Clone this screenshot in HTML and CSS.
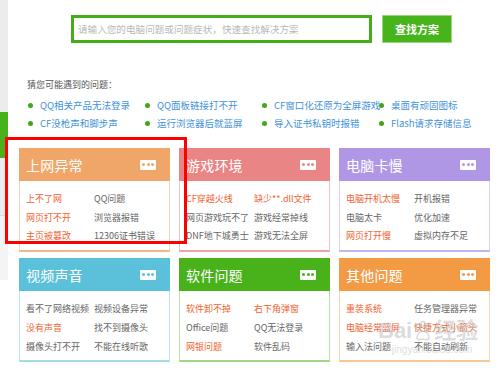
FILE: index.html
```html
<!DOCTYPE html>
<html lang="zh-CN">
<head>
    <meta charset="UTF-8">
    <meta name="viewport" content="width=device-width, initial-scale=1.0">
    <title>电脑问题诊断</title>
    <link rel="stylesheet" href="styles.css">
</head>
<body>
    <div class="page">
        <div class="side">
            <div class="side-top"></div>
            <div class="side-active"></div>
            <div class="side-mid"></div>
            <div class="side-low"></div>
        </div>

        <div class="main">
            <div class="search">
                <div class="search-box">请输入您的电脑问题或问题症状，快速查找解决方案</div>
                <div class="search-btn">查找方案</div>
            </div>

            <div class="guess-title">猜您可能遇到的问题：</div>
            <ul class="guess-list">
                <li>QQ相关产品无法登录</li>
                <li>QQ面板链接打不开</li>
                <li>CF窗口化还原为全屏游戏</li>
                <li>桌面有顽固图标</li>
                <li>CF没枪声和脚步声</li>
                <li>运行浏览器后就蓝屏</li>
                <li>导入证书私钥时报错</li>
                <li>Flash请求存储信息</li>
            </ul>

            <div class="cards">
                <div class="card orange">
                    <div class="card-head"><span class="card-title">上网异常</span><span class="more"><i></i><i></i><i></i></span></div>
                    <div class="card-body">
                        <a class="hot" href="#">上不了网</a><a href="#">QQ问题</a>
                        <a class="hot" href="#">网页打不开</a><a href="#">浏览器报错</a>
                        <a class="hot" href="#">主页被篡改</a><a href="#">12306证书错误</a>
                    </div>
                </div>
                <div class="card pink">
                    <div class="card-head"><span class="card-title">游戏环境</span><span class="more"><i></i><i></i><i></i></span></div>
                    <div class="card-body">
                        <a class="hot" href="#">CF穿越火线</a><a class="hot" href="#">缺少**.dll文件</a>
                        <a href="#">网页游戏玩不了</a><a href="#">游戏经常掉线</a>
                        <a href="#">DNF地下城勇士</a><a href="#">游戏无法全屏</a>
                    </div>
                </div>
                <div class="card purple">
                    <div class="card-head"><span class="card-title">电脑卡慢</span><span class="more"><i></i><i></i><i></i></span></div>
                    <div class="card-body">
                        <a class="hot" href="#">电脑开机太慢</a><a href="#">开机报错</a>
                        <a href="#">电脑太卡</a><a href="#">优化加速</a>
                        <a class="hot" href="#">网页打开慢</a><a href="#">虚拟内存不足</a>
                    </div>
                </div>
                <div class="card cyan">
                    <div class="card-head"><span class="card-title">视频声音</span><span class="more"><i></i><i></i><i></i></span></div>
                    <div class="card-body">
                        <a href="#">看不了网络视频</a><a href="#">视频设备异常</a>
                        <a class="hot" href="#">没有声音</a><a href="#">找不到摄像头</a>
                        <a href="#">摄像头打不开</a><a href="#">不能在线听歌</a>
                    </div>
                </div>
                <div class="card green">
                    <div class="card-head"><span class="card-title">软件问题</span><span class="more"><i></i><i></i><i></i></span></div>
                    <div class="card-body">
                        <a class="hot" href="#">软件卸不掉</a><a class="hot" href="#">右下角弹窗</a>
                        <a href="#">Office问题</a><a href="#">QQ无法登录</a>
                        <a class="hot" href="#">网银问题</a><a href="#">软件乱码</a>
                    </div>
                </div>
                <div class="card amber">
                    <div class="card-head"><span class="card-title">其他问题</span><span class="more"><i></i><i></i><i></i></span></div>
                    <div class="card-body">
                        <a class="hot" href="#">重装系统</a><a href="#">任务管理器异常</a>
                        <a class="hot" href="#">电脑经常蓝屏</a><a class="hot" href="#">快捷方式小箭头</a>
                        <a href="#">输入法问题</a><a href="#">不能自动刷新</a>
                    </div>
                </div>
            </div>
        </div>

        <div class="mark"></div>

        <div class="watermark">
            <div class="wm-logo">Bai<svg width="22" height="22" viewBox="0 0 22 22"><g fill="none" stroke="currentColor" stroke-width="1.6"><ellipse cx="6" cy="7" rx="2" ry="3"/><ellipse cx="11" cy="4.5" rx="2" ry="3"/><ellipse cx="16" cy="7" rx="2" ry="3"/><path d="M5 18c0-4 3-7 6-7s6 3 6 7c0 2-3 2-6 1-3 1-6 1-6-1z"/></g></svg>经验</div>
            <div class="wm-url">jingyan.baidu.com</div>
        </div>
    </div>
</body>
</html>
```

FILE: styles.css
```css
body {
    margin: 0;
    padding: 0;
    background: #fff;
    font-family: "Microsoft YaHei", "Noto Sans CJK SC", "Noto Sans", sans-serif;
}

.page {
    position: relative;
    width: 500px;
    height: 372px;
    overflow: hidden;
    display: flex;
}

/* left sidebar strip */
.side {
    width: 8px;
    flex-shrink: 0;
    display: flex;
    flex-direction: column;
}

.side-top { height: 112px; background: #ececec; }
.side-active { height: 46px; background: #48b21c; }
.side-mid { height: 57px; background: #ececec; border-bottom: 1px solid #dcdcdc; }
.side-low { height: 64px; background: #f4f4f4; }

.main {
    flex: 1;
}

/* search */
.search {
    display: flex;
    gap: 10px;
    margin: 15px 0 0 63px;
}

.search-box {
    box-sizing: border-box;
    width: 301px;
    height: 28px;
    border: 3px solid #44ae18;
    padding-left: 4px;
    font-size: 9.6px;
    line-height: 22px;
    color: #b8b8b8;
}

.search-btn {
    box-sizing: border-box;
    width: 70px;
    height: 28px;
    background: #47b41b;
    border: 1px solid #9ad77c;
    color: #fff;
    font-size: 11px;
    font-weight: bold;
    line-height: 26px;
    text-align: center;
}

/* guess list */
.guess-title {
    margin: 35px 0 0 19px;
    font-size: 9px;
    line-height: 14px;
    color: #555;
}

.guess-list {
    list-style: none;
    margin: 4px 0 0 19px;
    padding: 0;
    display: grid;
    grid-template-columns: repeat(4, 117px);
}

.guess-list li {
    display: flex;
    align-items: center;
    gap: 7px;
    height: 18px;
    font-size: 9.5px;
    color: #3f92da;
    white-space: nowrap;
}

.guess-list li::before {
    content: "";
    width: 5px;
    height: 5px;
    margin-left: 1px;
    border-radius: 50%;
    background: #3fa817;
    flex-shrink: 0;
}

/* category cards */
.cards {
    margin: 16px 0 0 11px;
    display: grid;
    grid-template-columns: repeat(3, 151px);
    column-gap: 9px;
    row-gap: 6px;
}

.card-head {
    height: 33px;
    display: flex;
    align-items: center;
    justify-content: space-between;
    padding: 0 14px 0 7px;
    color: #fff;
}

.card-title {
    font-size: 14px;
    letter-spacing: 0.2px;
}

.more {
    width: 16px;
    height: 10px;
    background: #fff;
    border-radius: 1px;
    display: flex;
    align-items: center;
    justify-content: center;
    gap: 1.5px;
}

.more i {
    width: 3px;
    height: 3px;
    border-radius: 50%;
    background: currentColor;
}

.card-body {
    display: grid;
    grid-template-columns: 68px 1fr;
    padding: 9px 0 4px 6px;
    border: 1px solid;
    border-top: none;
    border-bottom-width: 2px;
}

.card-body a {
    font-size: 9px;
    line-height: 18.7px;
    color: #666;
    text-decoration: none;
    white-space: nowrap;
}

.card-body a.hot {
    color: #f2622e;
}

.orange .card-head { background: #f1a669; }
.orange .more { color: #f1a669; }
.orange .card-body { border-color: #f8d3b6; border-bottom-color: #f3b888; }

.pink .card-head { background: #e98584; }
.pink .more { color: #e98584; }
.pink .card-body { border-color: #f4c4c4; border-bottom-color: #eea3a3; }

.purple .card-head { background: #af97e6; }
.purple .more { color: #af97e6; }
.purple .card-body { border-color: #dcd0f6; border-bottom-color: #c5b5ef; }

.cyan .card-head { background: #5bc1da; }
.cyan .more { color: #5bc1da; }
.cyan .card-body { border-color: #bfe6f0; border-bottom-color: #a4dbe9; }

.green .card-head { background: #49b21b; }
.green .more { color: #49b21b; }
.green .card-body { border-color: #b8e1a5; border-bottom-color: #a0d888; }

.amber .card-head { background: #f39a45; }
.amber .more { color: #f39a45; }
.amber .card-body { border-color: #fbd6b2; border-bottom-color: #f8c797; }

/* red annotation box drawn over the first card */
.mark {
    position: absolute;
    left: 5px;
    top: 137px;
    width: 176px;
    height: 101px;
    border: 3px solid #f00;
}

/* faint site watermark */
.watermark {
    position: absolute;
    left: 378px;
    top: 318px;
    color: rgba(190, 190, 190, 0.55);
    text-align: center;
}

.wm-logo {
    display: flex;
    align-items: center;
    font-family: "Liberation Sans", "Noto Sans CJK SC", sans-serif;
    font-size: 22px;
    font-weight: bold;
    line-height: 26px;
}

.wm-url {
    font-family: "Liberation Sans", sans-serif;
    font-size: 10px;
    line-height: 12px;
    margin-left: 8px;
}
```
